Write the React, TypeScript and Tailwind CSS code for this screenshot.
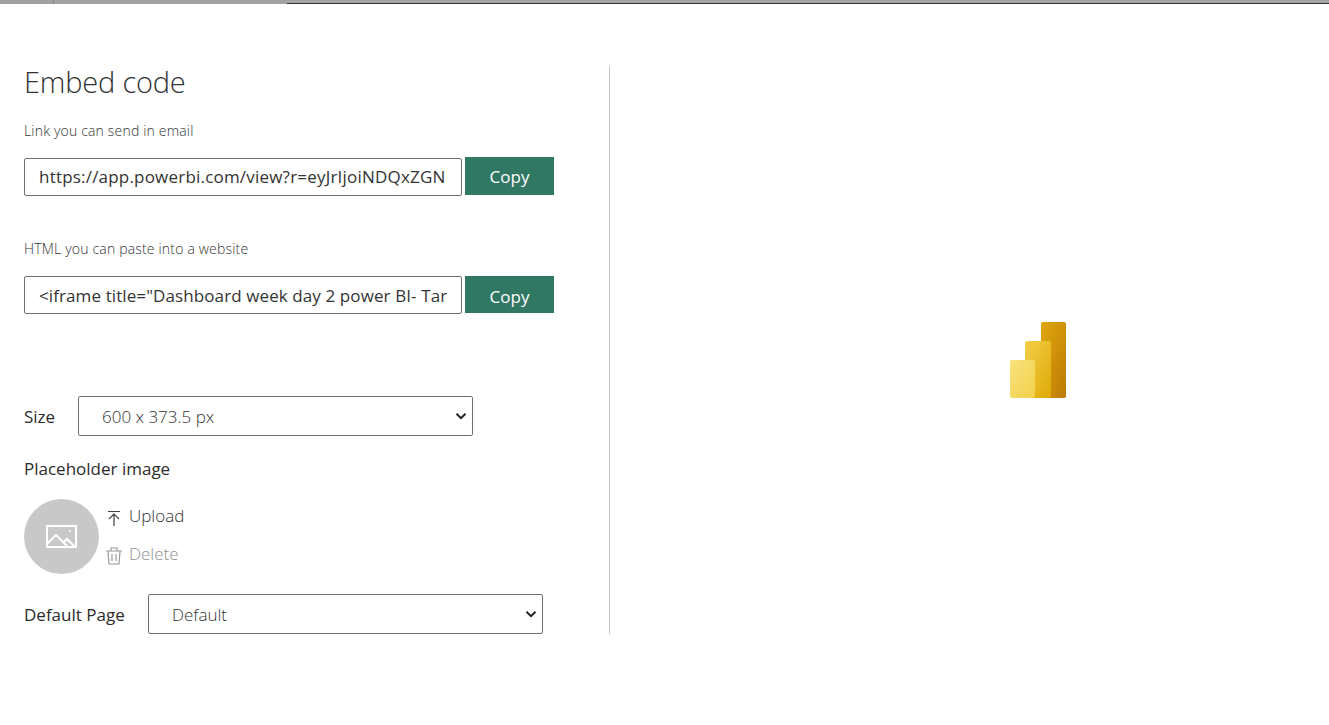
import React from "react";

const font = "font-['Open_Sans',_'Noto_Sans',sans-serif]";

const EmbedField = ({ label, value, className, rowClass, buttonClass, inputClass }: { label: string; value: string; className: string; rowClass: string; buttonClass: string; inputClass: string }) => (
  <div className={className}>
    <div className="h-[20px] text-[14px] leading-[18px] font-light tracking-[0.18px] text-[#333]">{label}</div>
    <div className={`flex items-start ${rowClass}`}>
      <div className={`h-[38px] w-[438px] overflow-hidden whitespace-nowrap rounded-[2px] border border-[#707070] pl-[14px] text-[17px] text-[#333] ${inputClass}`}>
        {value}
      </div>
      <button className={`ml-[3px] w-[89px] bg-[#317864] text-[17px] text-white ${buttonClass}`}>Copy</button>
    </div>
  </div>
);

const Chevron = () => (
  <svg width="12" height="12" viewBox="0 0 12 12" fill="none" stroke="#222" strokeWidth="2">
    <path d="M1.5 3.8 6 8.2l4.5-4.4" />
  </svg>
);

const FakeSelect = ({ value, width }: { value: string; width: string }) => (
  <div className={`${width} flex h-[40px] items-center justify-between rounded-[2px] border border-[#707070] pl-[23px] pr-[5px] text-[17px] font-light text-[#333]`}>
    <span className="pt-[2px]">{value}</span>
    <Chevron />
  </div>
);

const PowerBiLogo = () => (
  <svg width="57" height="76" viewBox="0 0 57 76">
    <defs>
      <linearGradient id="a" x1="0" y1="0" x2="1" y2="1">
        <stop offset="0" stopColor="#e0a80c" />
        <stop offset="1" stopColor="#bd7a06" />
      </linearGradient>
      <linearGradient id="b" x1="0" y1="0" x2="1" y2="1">
        <stop offset="0" stopColor="#f2d04a" />
        <stop offset="1" stopColor="#dfa806" />
      </linearGradient>
      <linearGradient id="c" x1="0" y1="0" x2="1" y2="1">
        <stop offset="0" stopColor="#f8e27e" />
        <stop offset="1" stopColor="#f2d04a" />
      </linearGradient>
    </defs>
    <rect x="31" y="0" width="25" height="76" rx="2" fill="url(#a)" />
    <rect x="15" y="19" width="26" height="57" rx="2" fill="url(#b)" />
    <rect x="0" y="38" width="25" height="38" rx="2" fill="url(#c)" />
  </svg>
);

export default function App() {
  return (
    <div className={`${font} h-[725px] w-[1329px] overflow-hidden bg-white`}>
      <div className="flex h-[4px]">
        <div className="h-full w-[54px] border-r border-[#8a8a8a] bg-[#a0a0a0]" />
        <div className="h-full w-[233px] bg-[#a2a2a2]" />
        <div className="h-full flex-1 border-b border-[#333] bg-[#a2a2a2]" />
      </div>
      <div className="flex pt-[62px]">
        <div className="h-[568px] w-[610px] border-r border-[#c8c8c8] pl-[24px]">
          <h1 className="h-[32px] text-[29px] leading-[32px] font-light tracking-[-0.2px] text-[#333]">Embed code</h1>
          <EmbedField
            className="mt-[24px]"
            rowClass="mt-[15px]"
            inputClass="mt-[1px] leading-[36px] tracking-[0.2px]"
            buttonClass="h-[38px] pt-[2px]"
            label="Link you can send in email"
            value="https://app.powerbi.com/view?r=eyJrIjoiNDQxZGN"
          />
          <EmbedField
            className="mt-[44px]"
            rowClass="mt-[16px]"
            inputClass="leading-[38px] tracking-[0.1px]"
            buttonClass="h-[37px] pt-[4px]"
            label="HTML you can paste into a website"
            value={'<iframe title="Dashboard week day 2 power BI- Tar'}
          />
          <div className="mt-[82px] flex items-center">
            <span className="w-[54px] pt-[2px] text-[17px] font-medium text-[#2b2b2b]">Size</span>
            <FakeSelect value="600 x 373.5 px" width="w-[395px]" />
          </div>
          <div className="mt-[22px] text-[17px] leading-[22px] font-medium text-[#2b2b2b]">Placeholder image</div>
          <div className="mt-[19px] flex">
            <div className="flex h-[75px] w-[75px] items-center justify-center rounded-full bg-[#c8c8c8]">
              <svg width="32" height="26" viewBox="0 0 32 26" fill="none" stroke="#fff" strokeWidth="2">
                <rect x="1" y="2" width="29" height="21" />
                <path d="M1 20 10 11l11 11M17 19l4-4 8 8" />
                <circle cx="24" cy="7" r="1" fill="#fff" stroke="none" />
              </svg>
            </div>
            <div className="ml-[8px] text-[17px]">
              <div className="mt-[4px] flex h-[26px] items-center font-light text-[#333]">
                <svg width="14" height="16" viewBox="0 0 14 16" fill="none" stroke="#444" strokeWidth="1.2" className="mt-[3px]">
                  <path d="M1 1.5h12M7 16V4M2 9l5-5 5 5" />
                </svg>
                <span className="ml-[8px]">Upload</span>
              </div>
              <div className="mt-[12px] flex h-[26px] items-center font-light text-[#8f8f8f]">
                <svg width="16" height="18" viewBox="0 0 16 18" fill="none" stroke="#999" strokeWidth="1.2" className="mt-[3px] -ml-[1px]">
                  <path d="M0 4h16M5 4V1h6v3M2 4l1 13h10l1-13M6 7v7M10 7v7" />
                </svg>
                <span className="ml-[7px]">Delete</span>
              </div>
            </div>
          </div>
          <div className="mt-[20px] flex items-center">
            <span className="w-[124px] pt-[2px] text-[17px] font-medium text-[#2b2b2b]">Default Page</span>
            <FakeSelect value="Default" width="w-[395px]" />
          </div>
        </div>
        <div className="flex h-[568px] flex-1 items-center justify-center pl-[137px] pt-[20px]">
          <PowerBiLogo />
        </div>
      </div>
    </div>
  );
}
